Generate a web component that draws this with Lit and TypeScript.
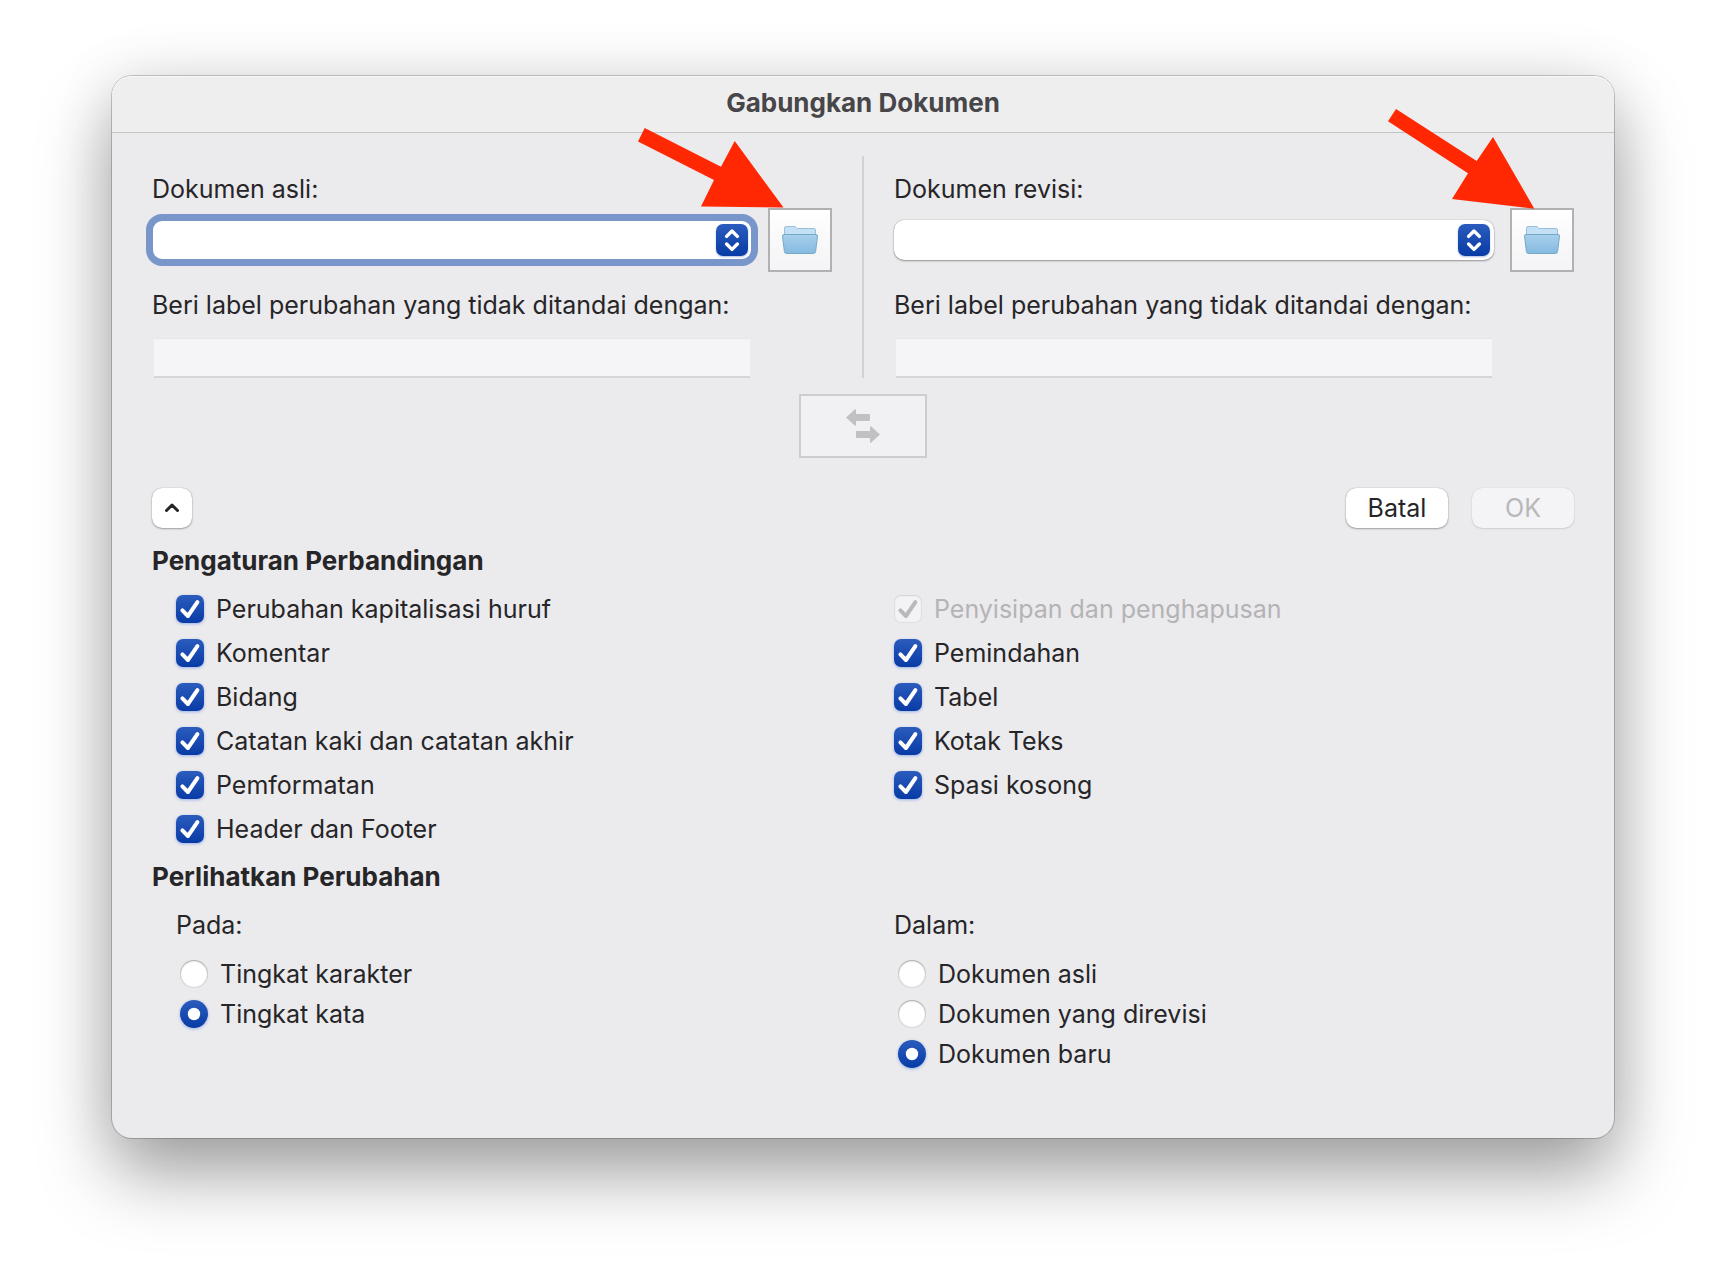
import { LitElement, html, css, svg } from "lit";
import { customElement, property } from "lit/decorators.js";
import { classMap } from "lit/directives/class-map.js";

interface Option {
  label: string;
  checked?: boolean;
  disabled?: boolean;
}

const FONT = css`Inter, "Liberation Sans", sans-serif`;

/* Picker row for one of the two documents, with its change label. */
@customElement("document-source")
export class DocumentSource extends LitElement {
  @property() name = "";
  @property() label = "";
  @property() pointer = "";
  @property({ type: Boolean }) active = false;

  static styles = css`
    :host {
      display: block;
      font: 400 25px/32px ${FONT};
      color: #262528;
    }
    .caption {
      display: block;
    }
    .row {
      display: flex;
      align-items: center;
      gap: 16px;
      margin: 3px 0 17px;
    }
    .picker {
      flex: 1;
      display: grid;
      align-items: center;
      min-width: 0;
      border-radius: 10px;
      background: #fff;
      box-shadow: 0 0 1px rgba(0, 0, 0, 0.4), 0 1px 2px rgba(0, 0, 0, 0.35);
    }
    .picker.active {
      outline: 7px solid #7896ca;
      outline-offset: -1px;
    }
    .choice {
      grid-area: 1 / 1;
      appearance: none;
      width: 100%;
      height: 40px;
      padding: 0 44px 0 12px;
      border: 0;
      border-radius: 10px;
      outline: none;
      background: transparent;
      color: inherit;
      font: inherit;
    }
    .stepper {
      grid-area: 1 / 1;
      justify-self: end;
      display: block;
      width: 32px;
      height: 32px;
      margin-right: 4px;
      border-radius: 7px;
      background: linear-gradient(#2b5cbd, #083ba5);
      box-shadow: 0 1px 2px rgba(20, 60, 170, 0.35);
      pointer-events: none;
    }
    .browse-area {
      position: relative;
      display: flex;
    }
    .browse {
      display: grid;
      place-items: center;
      width: 64px;
      height: 64px;
      padding: 0;
      border: 2px solid #b1b1b2;
      background: linear-gradient(#ffffff, #f4f3f5);
    }
    .folder {
      display: block;
      width: 36px;
      height: 30px;
    }
    .pointer {
      position: absolute;
      pointer-events: none;
      fill: #ff2803;
    }
    .pointer.shallow {
      right: 46px;
      bottom: 64px;
    }
    .pointer.steep {
      right: 38px;
      bottom: 63px;
    }
    .tag {
      display: block;
      box-sizing: border-box;
      width: calc(100% - 84px);
      height: 40px;
      margin: 17px 0 0 2px;
      padding: 0 8px;
      border: 0;
      border-top: 1px solid #e6e5e7;
      border-bottom: 2px solid #d5d4d7;
      background: #f5f4f7;
      color: inherit;
      font: inherit;
    }
  `;

  private renderPointer() {
    return this.pointer === "shallow"
      ? html`<svg class="pointer shallow" width="150" height="82" viewBox="0 0 150 82" aria-hidden="true">
          <path d="M8.7 2 85 40.8 98.7 15 147.5 81.5 65 80.5 78 54 2 15.5Z" />
        </svg>`
      : html`<svg class="pointer steep" width="150" height="102" viewBox="0 0 150 102" aria-hidden="true">
          <path d="M10 2 90.7 54 107 30 148.3 101.7 66 92 82 66.3 2 14.3Z" />
        </svg>`;
  }

  render() {
    return html`
      <label class="caption" for="choice">${this.label}</label>
      <div class="row">
        <div class=${classMap({ picker: true, active: this.active })}>
          <select class="choice" id="choice" name=${this.name}>
            <option value="" selected></option>
          </select>
          <svg class="stepper" viewBox="0 0 32 32" fill="none" stroke="#fff" stroke-width="3.4"
            stroke-linecap="round" stroke-linejoin="round" aria-hidden="true">
            <path d="M10.6 12.4 16 7 21.4 12.4M10.6 20 16 25.4 21.4 20" />
          </svg>
        </div>
        <div class="browse-area">
          <button class="browse" type="button" aria-label="${this.label}">
            <svg class="folder" viewBox="0 0 36 30" aria-hidden="true">
              <defs>
                <linearGradient id="front" x1="0" y1="0" x2="0" y2="1">
                  <stop offset="0" stop-color="#a7d0ec" />
                  <stop offset="1" stop-color="#85bae0" />
                </linearGradient>
              </defs>
              <path d="M2.5 10V3.2Q2.5 1.5 4.2 1.5H12Q13.4 1.5 14.2 2.5L15.2 3.5H32Q33.5 3.5 33.5 5V10Z"
                fill="#c3e0f5" stroke="#97bfdc" />
              <path d="M2 9.5H34Q35.7 9.5 35.5 11L33.6 26.5Q33.3 28.5 31.5 28.5H4.5Q2.7 28.5 2.4 26.5L0.5 11Q0.3 9.5 2 9.5Z"
                fill="url(#front)" stroke="#76a8ca" />
            </svg>
          </button>
          ${this.renderPointer()}
        </div>
      </div>
      <label class="caption" for="tag">Beri label perubahan yang tidak ditandai dengan:</label>
      <input class="tag" id="tag" type="text" disabled />
    `;
  }
}

/* A list of tick boxes or of radio buttons. */
@customElement("option-list")
export class OptionList extends LitElement {
  @property() kind: "checkbox" | "radio" = "checkbox";
  @property() name = "";
  @property({ attribute: false }) options: Option[] = [];

  static styles = css`
    :host {
      display: block;
      font: 400 25px/32px ${FONT};
      color: #262528;
    }
    .list {
      display: flex;
      flex-direction: column;
      align-items: flex-start;
      gap: 12px;
    }
    .list.radio {
      gap: 8px;
      padding-left: 4px;
    }
    .option {
      display: flex;
      align-items: center;
      gap: 12px;
    }
    .option.disabled {
      color: #b4b3b6;
    }
    .mark {
      display: grid;
    }
    .box {
      grid-area: 1 / 1;
      appearance: none;
      width: 28px;
      height: 28px;
      margin: 0;
      border-radius: 7px;
      background: #fff;
      box-shadow: inset 0 0 1px 1px rgba(0, 0, 0, 0.16), inset 0 1px 2px rgba(0, 0, 0, 0.22);
    }
    .radio .box {
      border-radius: 50%;
    }
    .box:checked {
      background: linear-gradient(#2b5cbd, #083ba5);
      box-shadow: 0 1px 3px rgba(30, 90, 230, 0.4);
    }
    .box:disabled {
      background: #f3f2f5;
      box-shadow: inset 0 0 1px 1px rgba(0, 0, 0, 0.08), inset 0 1px 2px rgba(0, 0, 0, 0.06);
    }
    .glyph {
      grid-area: 1 / 1;
      display: none;
      width: 28px;
      height: 28px;
      color: #fff;
      pointer-events: none;
    }
    .box:checked + .glyph {
      display: block;
    }
    .disabled .glyph {
      color: #b9b8bb;
    }
  `;

  render() {
    return html`
      <div class="list ${this.kind}">
        ${this.options.map(
          (o) => html`
            <label class=${classMap({ option: true, disabled: !!o.disabled })}>
              <span class="mark">
                <input class="box" type=${this.kind} name=${this.name}
                  ?checked=${o.checked} ?disabled=${o.disabled} />
                <svg class="glyph" viewBox="0 0 28 28" aria-hidden="true">
                  ${this.kind === "radio"
                    ? svg`<circle cx="14" cy="14" r="6.2" fill="currentColor" />`
                    : svg`<path d="M6.4 15.4 11.9 21 21.4 7.2" fill="none" stroke="currentColor"
                        stroke-width="4" stroke-linecap="round" stroke-linejoin="round" />`}
                </svg>
              </span>
              <span>${o.label}</span>
            </label>
          `
        )}
      </div>
    `;
  }
}

@customElement("app-root")
export class AppRoot extends LitElement {
  static styles = css`
    :host {
      display: block;
      box-sizing: border-box;
      min-height: 100vh;
      padding: 76px 112px 148px;
      background: #fff;
      font: 400 25px/32px ${FONT};
      color: #262528;
      overflow: hidden;
    }
    .dialog {
      border-radius: 20px;
      background: #ebeaec;
      box-shadow: 0 0 0 1px rgba(0, 0, 0, 0.2), 0 36px 72px rgba(0, 0, 0, 0.36),
        0 0 64px rgba(0, 0, 0, 0.09);
    }
    .titlebar {
      padding: 11px 0 13px;
      border-bottom: 1px solid #c3c2c4;
      border-radius: 20px 20px 0 0;
      background: #efeeef;
      box-shadow: inset 0 1px 0 #f8f8f8;
    }
    .title {
      margin: 0;
      font: 700 26px/32px ${FONT};
      color: #474648;
      text-align: center;
    }
    .content {
      padding: 23px 40px 68px;
    }
    .sources {
      display: grid;
      grid-template-columns: 1fr 2px 1fr;
      gap: 30px;
    }
    .source {
      padding-top: 17px;
    }
    .divider {
      background: #d2d1d3;
    }
    .swap {
      display: grid;
      place-items: center;
      width: 128px;
      height: 64px;
      margin: 16px auto 30px;
      padding: 0;
      border: 2px solid #cdccce;
      background: #f1f0f3;
      color: #c1c0c2;
    }
    .actions {
      display: flex;
      gap: 24px;
    }
    .toggle,
    .button {
      height: 40px;
      padding: 0;
      border: 0;
      border-radius: 10px;
      background: #fff;
      box-shadow: 0 0 1px rgba(0, 0, 0, 0.4), 0 1px 2px rgba(0, 0, 0, 0.3);
      color: inherit;
      font: inherit;
    }
    .toggle {
      display: grid;
      place-items: center;
      width: 40px;
      margin-right: auto;
    }
    .button {
      width: 102px;
    }
    .button:disabled {
      background: #f4f3f6;
      box-shadow: 0 0 1px rgba(0, 0, 0, 0.2), 0 1px 2px rgba(0, 0, 0, 0.1);
      color: #b8b7ba;
    }
    .heading {
      margin: 16px 0;
      font: 700 26px/32px ${FONT};
    }
    .actions + .heading {
      margin-top: 17px;
    }
    .columns {
      display: grid;
      grid-template-columns: 1fr 1fr;
      gap: 62px;
    }
    .indented {
      padding-left: 24px;
    }
    .group {
      margin: 0;
      font: inherit;
    }
    .choices {
      display: block;
      margin-top: 17px;
    }
  `;

  private left: Option[] = [
    { label: "Perubahan kapitalisasi huruf", checked: true },
    { label: "Komentar", checked: true },
    { label: "Bidang", checked: true },
    { label: "Catatan kaki dan catatan akhir", checked: true },
    { label: "Pemformatan", checked: true },
    { label: "Header dan Footer", checked: true },
  ];

  private right: Option[] = [
    { label: "Penyisipan dan penghapusan", checked: true, disabled: true },
    { label: "Pemindahan", checked: true },
    { label: "Tabel", checked: true },
    { label: "Kotak Teks", checked: true },
    { label: "Spasi kosong", checked: true },
  ];

  private levels: Option[] = [
    { label: "Tingkat karakter" },
    { label: "Tingkat kata", checked: true },
  ];

  private targets: Option[] = [
    { label: "Dokumen asli" },
    { label: "Dokumen yang direvisi" },
    { label: "Dokumen baru", checked: true },
  ];

  render() {
    return html`
      <main class="dialog">
        <header class="titlebar"><h1 class="title">Gabungkan Dokumen</h1></header>
        <div class="content">
          <div class="sources">
            <document-source class="source" name="original" label="Dokumen asli:" pointer="shallow" active></document-source>
            <div class="divider"></div>
            <document-source class="source" name="revised" label="Dokumen revisi:" pointer="steep"></document-source>
          </div>
          <button class="swap" type="button" aria-label="Tukar" disabled>
            <svg width="34" height="34" viewBox="0 0 34 34" fill="currentColor" aria-hidden="true">
              <path d="M0 8.5 9 0.3Q10 0 10 1V5H23Q24 5 24 6V11Q24 12 23 12H10V16Q10 17 9 16.7Z" />
              <path d="M34 25.5 25 17.3Q24 17 24 18V22H11Q10 22 10 23V28Q10 29 11 29H24V33Q24 34 25 33.7Z" />
            </svg>
          </button>
          <div class="actions">
            <button class="toggle" type="button" aria-label="Pengaturan Perbandingan" aria-expanded="true">
              <svg width="40" height="40" viewBox="0 0 40 40" fill="none" stroke="#262528" stroke-width="3"
                stroke-linecap="round" stroke-linejoin="round" aria-hidden="true">
                <path d="M14.5 22.5 20 17 25.5 22.5" />
              </svg>
            </button>
            <button class="button" type="button">Batal</button>
            <button class="button" type="button" disabled>OK</button>
          </div>
          <h2 class="heading">Pengaturan Perbandingan</h2>
          <div class="columns">
            <option-list class="indented" name="compare" .options=${this.left}></option-list>
            <option-list name="compare" .options=${this.right}></option-list>
          </div>
          <h2 class="heading">Perlihatkan Perubahan</h2>
          <div class="columns">
            <section class="indented">
              <h3 class="group">Pada:</h3>
              <option-list class="choices" kind="radio" name="level" .options=${this.levels}></option-list>
            </section>
            <section>
              <h3 class="group">Dalam:</h3>
              <option-list class="choices" kind="radio" name="target" .options=${this.targets}></option-list>
            </section>
          </div>
        </div>
      </main>
    `;
  }
}
